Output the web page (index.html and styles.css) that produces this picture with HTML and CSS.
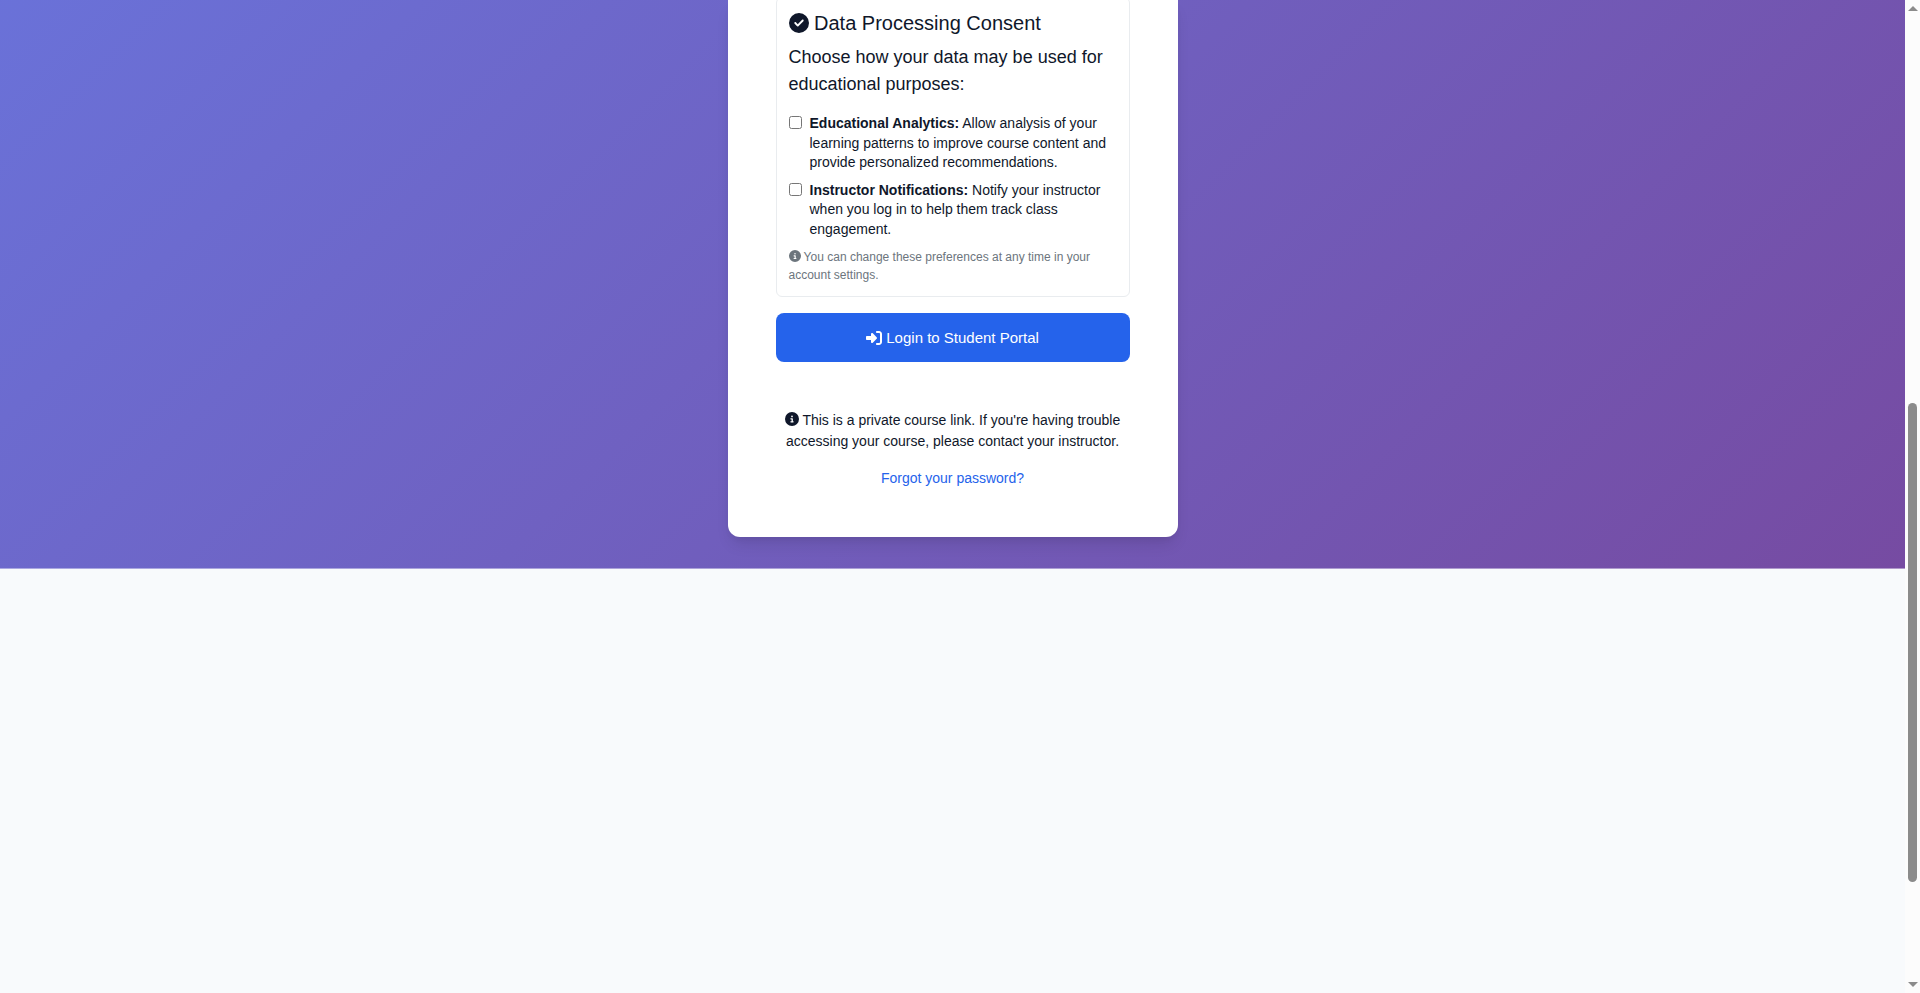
FILE: index.html
```html
<!DOCTYPE html>
<html lang="en">
<head>
<meta charset="utf-8">
<title>Student Portal Login</title>
<link rel="stylesheet" href="styles.css">
</head>
<body>
<svg class="sprite" aria-hidden="true">
  <symbol id="check" viewBox="0 0 512 512"><path d="M256 512A256 256 0 1 0 256 0a256 256 0 1 0 0 512zM369 209L241 337c-9.4 9.4-24.6 9.4-33.9 0l-64-64c-9.4-9.4-9.4-24.6 0-33.9s24.6-9.4 33.9 0l47 47L335 175c9.4-9.4 24.6-9.4 33.9 0s9.4 24.6 0 33.9z"/></symbol>
  <symbol id="info" viewBox="0 0 512 512"><path d="M256 512A256 256 0 1 0 256 0a256 256 0 1 0 0 512zM216 336l24 0 0-64-24 0c-13.3 0-24-10.7-24-24s10.7-24 24-24l48 0c13.3 0 24 10.7 24 24l0 88 8 0c13.3 0 24 10.7 24 24s-10.7 24-24 24l-80 0c-13.3 0-24-10.7-24-24s10.7-24 24-24zm40-208a32 32 0 1 1 0 64 32 32 0 1 1 0-64z"/></symbol>
  <symbol id="signin" viewBox="0 0 512 512"><path d="M217.9 105.9L340.7 228.7c7.2 7.2 11.3 17.1 11.3 27.3s-4.1 20.1-11.3 27.3L217.9 406.1c-6.4 6.4-15 9.9-24 9.9c-18.7 0-33.9-15.2-33.9-33.9l0-62.1L32 320c-17.7 0-32-14.3-32-32l0-64c0-17.7 14.3-32 32-32l128 0 0-62.1c0-18.7 15.2-33.9 33.9-33.9c9 0 17.6 3.6 24 9.9zM352 416l64 0c17.7 0 32-14.3 32-32l0-256c0-17.7-14.3-32-32-32l-64 0c-17.7 0-32-14.3-32-32s14.3-32 32-32l64 0c53 0 96 43 96 96l0 256c0 53-43 96-96 96l-64 0c-17.7 0-32-14.3-32-32s14.3-32 32-32z"/></symbol>
</svg>
<div class="page">
  <main class="hero">
    <form class="card">
      <section class="consent">
        <h2 class="consent-title"><svg class="icon" aria-hidden="true"><use href="#check"/></svg> Data Processing Consent</h2>
        <p class="lead">Choose how your data may be used for educational purposes:</p>
        <div class="option">
          <input type="checkbox" id="analytics">
          <label for="analytics"><strong>Educational Analytics:</strong> Allow analysis of your learning patterns to improve course content and provide personalized recommendations.</label>
        </div>
        <div class="option">
          <input type="checkbox" id="notifications">
          <label for="notifications"><strong>Instructor Notifications:</strong> Notify your instructor when you log in to help them track class engagement.</label>
        </div>
        <p class="hint"><svg class="icon" aria-hidden="true"><use href="#info"/></svg> You can change these preferences at any time in your account settings.</p>
      </section>
      <button class="submit" type="button"><svg class="icon" aria-hidden="true"><use href="#signin"/></svg> Login to Student Portal</button>
      <footer class="card-footer">
        <p><svg class="icon" aria-hidden="true"><use href="#info"/></svg> This is a private course link. If you're having trouble accessing your course, please contact your instructor.</p>
        <a href="#forgot">Forgot your password?</a>
      </footer>
    </form>
  </main>
</div>
<div class="scrollbar" aria-hidden="true">
  <span class="arrow arrow-up"></span>
  <span class="track"><span class="thumb"></span></span>
  <span class="arrow arrow-down"></span>
</div>
</body>
</html>
```

FILE: styles.css
```css
* { box-sizing: border-box; }

body {
  margin: 0;
  height: 100vh;
  display: flex;
  overflow: hidden;
  background: #f8fafc;
  color: #0f172a;
  font-family: "Liberation Sans", Arial, sans-serif;
  font-size: 14px;
  line-height: 21px;
}

h2, p { margin: 0; }

.sprite { display: none; }

.icon {
  width: 1em;
  height: 1em;
  fill: currentColor;
  vertical-align: -0.125em;
}

.page { flex: 1; min-width: 0; }

/* The gradient continues above the visible part of the hero. */
.hero {
  display: flex;
  justify-content: center;
  padding-bottom: 32px;
  background: linear-gradient(135deg, #667eea 0%, #764ba2 100%) bottom / 100% 1373px no-repeat;
}

.card {
  width: 100%;
  max-width: 450px;
  padding: 0 48px 48px;
  background: #fff;
  border-radius: 0 0 12px 12px;
  box-shadow: 0 10px 15px -3px rgba(0, 0, 0, 0.1), 0 4px 6px -2px rgba(0, 0, 0, 0.05);
}

.consent {
  margin: -3px 0 16px;
  padding: 12px;
  border: 1px solid #e9ecef;
  border-radius: 6px;
}

.consent-title {
  margin-bottom: 8px;
  font-size: 20px;
  font-weight: 400;
  line-height: 26px;
}

.lead {
  margin-bottom: 16px;
  font-size: 18px;
  line-height: 27px;
}

.option {
  display: flex;
  align-items: flex-start;
  margin-bottom: 8px;
  line-height: 1.4;
}

.option input {
  flex: none;
  width: 13px;
  height: 13px;
  margin: 2px 8px 0 0;
}

.hint {
  color: #6c757d;
  font-size: 12px;
  line-height: 18px;
}

.submit {
  display: block;
  width: 100%;
  padding: 14px 24px;
  border: 0;
  border-radius: 8px;
  background: #2563eb;
  color: #fff;
  font-family: inherit;
  font-size: 15px;
  line-height: 21px;
}

.submit .icon {
  width: 16px;
  height: 16px;
  vertical-align: -3px;
}

.card-footer {
  display: flex;
  flex-direction: column;
  align-items: center;
  gap: 16px;
  margin-top: 48px;
  text-align: center;
}

.card-footer a { color: #2563eb; text-decoration: none; }

.scrollbar {
  flex: none;
  width: 15px;
  display: flex;
  flex-direction: column;
  align-items: center;
  padding: 6px 0;
  background: #fcfcfc;
}

.arrow {
  border: 5px solid transparent;
}

.arrow-up { border-top: 0; border-bottom-color: #8b8b8b; }
.arrow-down { border-bottom: 0; border-top-color: #8b8b8b; }

.track {
  flex: 1;
  display: flex;
  flex-direction: column;
  justify-content: flex-end;
  width: 9px;
}

.thumb {
  height: 49.3%;
  margin-bottom: 100px;
  border-radius: 5px;
  background: #8b8b8b;
}
```
